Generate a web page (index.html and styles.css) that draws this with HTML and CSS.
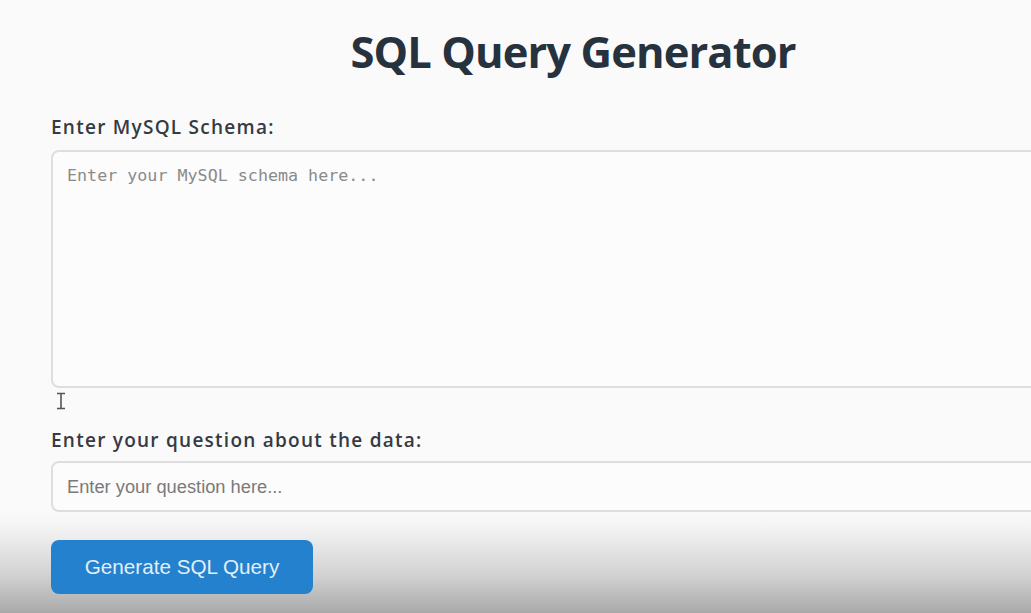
FILE: index.html
```html
<!DOCTYPE html>
<html lang="en">
<head>
<meta charset="utf-8">
<title>SQL Query Generator</title>
<link rel="stylesheet" href="styles.css">
</head>
<body>
<main class="container">
  <h1 class="title">SQL Query Generator</h1>
  <form class="form">
    <label class="field-label" for="schema">Enter MySQL Schema:</label>
    <textarea id="schema" class="schema-input" placeholder="Enter your MySQL schema here..."></textarea>
    <label class="field-label field-label--question" for="question">Enter your question about the data:</label>
    <input id="question" class="question-input" type="text" placeholder="Enter your question here...">
    <div class="actions">
      <button type="button" class="generate-btn">Generate SQL Query</button>
    </div>
  </form>
  <svg class="ibeam" width="10" height="18" viewBox="0 0 10 18" aria-hidden="true">
    <path d="M1 1.5h8M1 16.5h8M5 1.5v15" stroke="#555" stroke-width="1.6" fill="none"/>
  </svg>
</main>
</body>
</html>
```

FILE: styles.css
```css
html {
  height: 100%;
  background: linear-gradient(to bottom, #fafafa 0, #fafafa 512px, #f2f2f2 530px, #d2d2d2 575px, #a9a9a9 613px);
}

body {
  margin: 0;
  height: 100%;
  overflow: hidden;
  font-family: "Open Sans", "Liberation Sans", sans-serif;
}

.container {
  position: relative;
  width: 1044px;
  margin-left: 51px;
  padding-top: 24px;
}

.title {
  margin: 0;
  font-size: 43.5px;
  line-height: 56px;
  font-weight: 700;
  color: #27323f;
  text-align: center;
  letter-spacing: -0.9px;
}

.form {
  display: flex;
  flex-direction: column;
  margin-top: 35px;
}

.field-label {
  font-size: 19px;
  line-height: 24px;
  font-weight: 600;
  color: #353b43;
  letter-spacing: 1.25px;
  margin-bottom: 11px;
}

.field-label--question {
  margin-top: 40px;
  margin-bottom: 9px;
}

.schema-input {
  box-sizing: border-box;
  height: 238px;
  padding: 12px 14px;
  border: 2px solid #dedede;
  border-radius: 8px;
  background: #fcfcfc;
  font-family: "DejaVu Sans Mono", "Liberation Mono", monospace;
  font-size: 16.7px;
  line-height: 22px;
  resize: none;
  outline: none;
}

.schema-input::placeholder {
  color: #8a8a8a;
}

.question-input {
  box-sizing: border-box;
  height: 51px;
  padding: 0 14px;
  border: 2px solid #dedede;
  border-radius: 8px;
  background: #fcfcfc;
  font-family: "Liberation Sans", Arial, sans-serif;
  font-size: 18.3px;
  outline: none;
}

.question-input::placeholder {
  color: #7a7a7a;
}

.actions {
  margin-top: 28px;
}

.generate-btn {
  width: 262px;
  height: 54px;
  border: none;
  border-radius: 8px;
  background: #2481cd;
  color: #e3eef8;
  font-family: "Liberation Sans", Arial, sans-serif;
  font-size: 20.7px;
  cursor: pointer;
}

.ibeam {
  position: absolute;
  left: 5px;
  top: 392px;
}
```
